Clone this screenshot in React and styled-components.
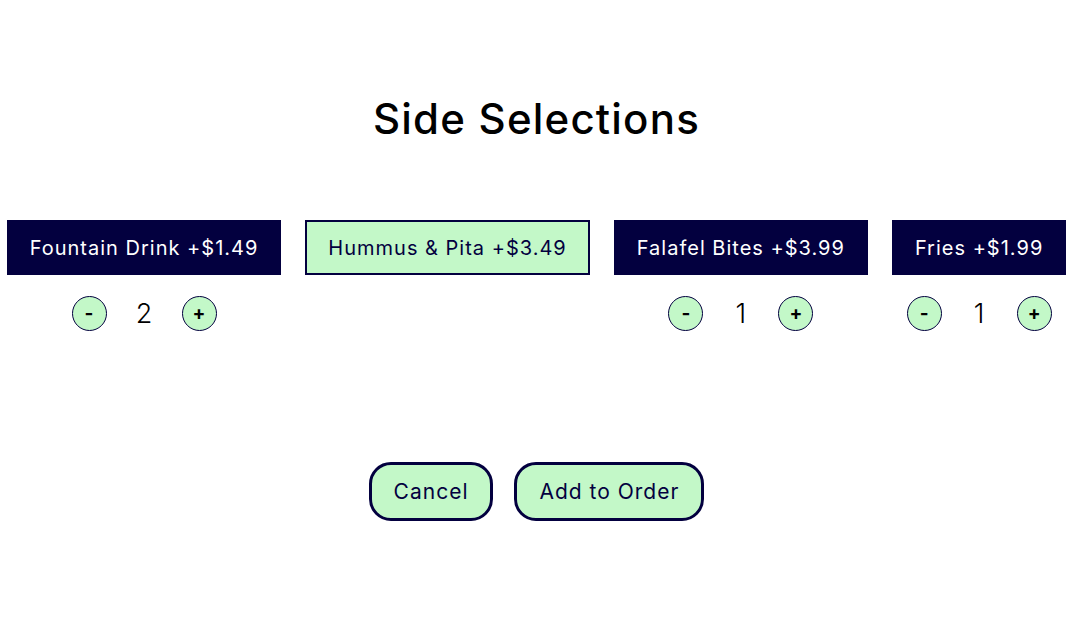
import React, { useState } from "react";
import styled, { createGlobalStyle } from "styled-components";

const GlobalStyle = createGlobalStyle`
    body {
        margin: 0;
        background: #ffffff;
        font-family: "Inter", "Noto Sans", sans-serif;
    }
`;

const sides = [
    { id: 1, name: "Fountain Drink", price: "1.49", qty: 2, selected: true },
    { id: 2, name: "Hummus & Pita", price: "3.49", qty: 0, selected: false },
    { id: 3, name: "Falafel Bites", price: "3.99", qty: 1, selected: true },
    { id: 4, name: "Fries", price: "1.99", qty: 1, selected: true },
];

function SideSelections() {
    const [items, setItems] = useState(sides);

    const change = (id, d) =>
        setItems((list) =>
            list.map((it) => (it.id === id ? { ...it, qty: Math.max(0, it.qty + d) } : it))
        );

    return (
        <Wrapper>
            <Heading>Side Selections</Heading>
            <SideList>
                {items.map((item) => (
                    <SideColumn key={item.id}>
                        <SideChip $selected={item.selected}>
                            {item.name} +${item.price}
                        </SideChip>
                        {item.selected && (
                            <Counter>
                                <RoundBtn onClick={() => change(item.id, -1)}>-</RoundBtn>
                                <Qty>{item.qty}</Qty>
                                <RoundBtn onClick={() => change(item.id, 1)}>+</RoundBtn>
                            </Counter>
                        )}
                    </SideColumn>
                ))}
            </SideList>
            <Actions>
                <ActionBtn>Cancel</ActionBtn>
                <ActionBtn>Add to Order</ActionBtn>
            </Actions>
        </Wrapper>
    );
}

const Wrapper = styled.div`
    width: 100%;
    padding-top: 91px;
    display: flex;
    flex-direction: column;
    align-items: center;
`;

const Heading = styled.h1`
    margin: 0;
    font-size: 42px;
    font-weight: 500;
    letter-spacing: 1.2px;
    line-height: 56px;
    color: #000;
`;

const SideList = styled.div`
    display: flex;
    justify-content: center;
    align-items: flex-start;
    gap: 24px;
    margin-top: 73px;
    height: 242px;
`;

const SideColumn = styled.div`
    display: flex;
    flex-direction: column;
    align-items: center;
    gap: 21px;
`;

const SideChip = styled.div`
    height: 55px;
    box-sizing: border-box;
    padding: 0 21px;
    display: flex;
    align-items: center;
    white-space: nowrap;
    font-size: 20px;
    letter-spacing: 1px;
    border: 2px solid #03003f;
    background-color: ${(p) => (p.$selected ? "#03003f" : "#c3f8c8")};
    color: ${(p) => (p.$selected ? "#ffffff" : "#03003f")};
`;

const Counter = styled.div`
    display: flex;
    align-items: center;
`;

const RoundBtn = styled.button`
    width: 35px;
    height: 35px;
    border-radius: 50%;
    border: 1px solid #03003f;
    background-color: #c3f8c8;
    color: #000;
    font-family: inherit;
    font-size: 19px;
    font-weight: 700;
    padding: 0;
    display: flex;
    justify-content: center;
    align-items: center;
    cursor: pointer;
`;

const Qty = styled.span`
    width: 75px;
    text-align: center;
    font-size: 27px;
    font-weight: 300;
    color: #000;
`;

const Actions = styled.div`
    display: flex;
    gap: 21px;
`;

const ActionBtn = styled.button`
    height: 59px;
    padding: 0 22px;
    border: 3px solid #03003f;
    border-radius: 22px;
    background-color: #c3f8c8;
    color: #03003f;
    font-family: inherit;
    font-size: 21px;
    letter-spacing: 1px;
    cursor: pointer;
`;

export default function App() {
    return (
        <>
            <GlobalStyle />
            <SideSelections />
        </>
    );
}
